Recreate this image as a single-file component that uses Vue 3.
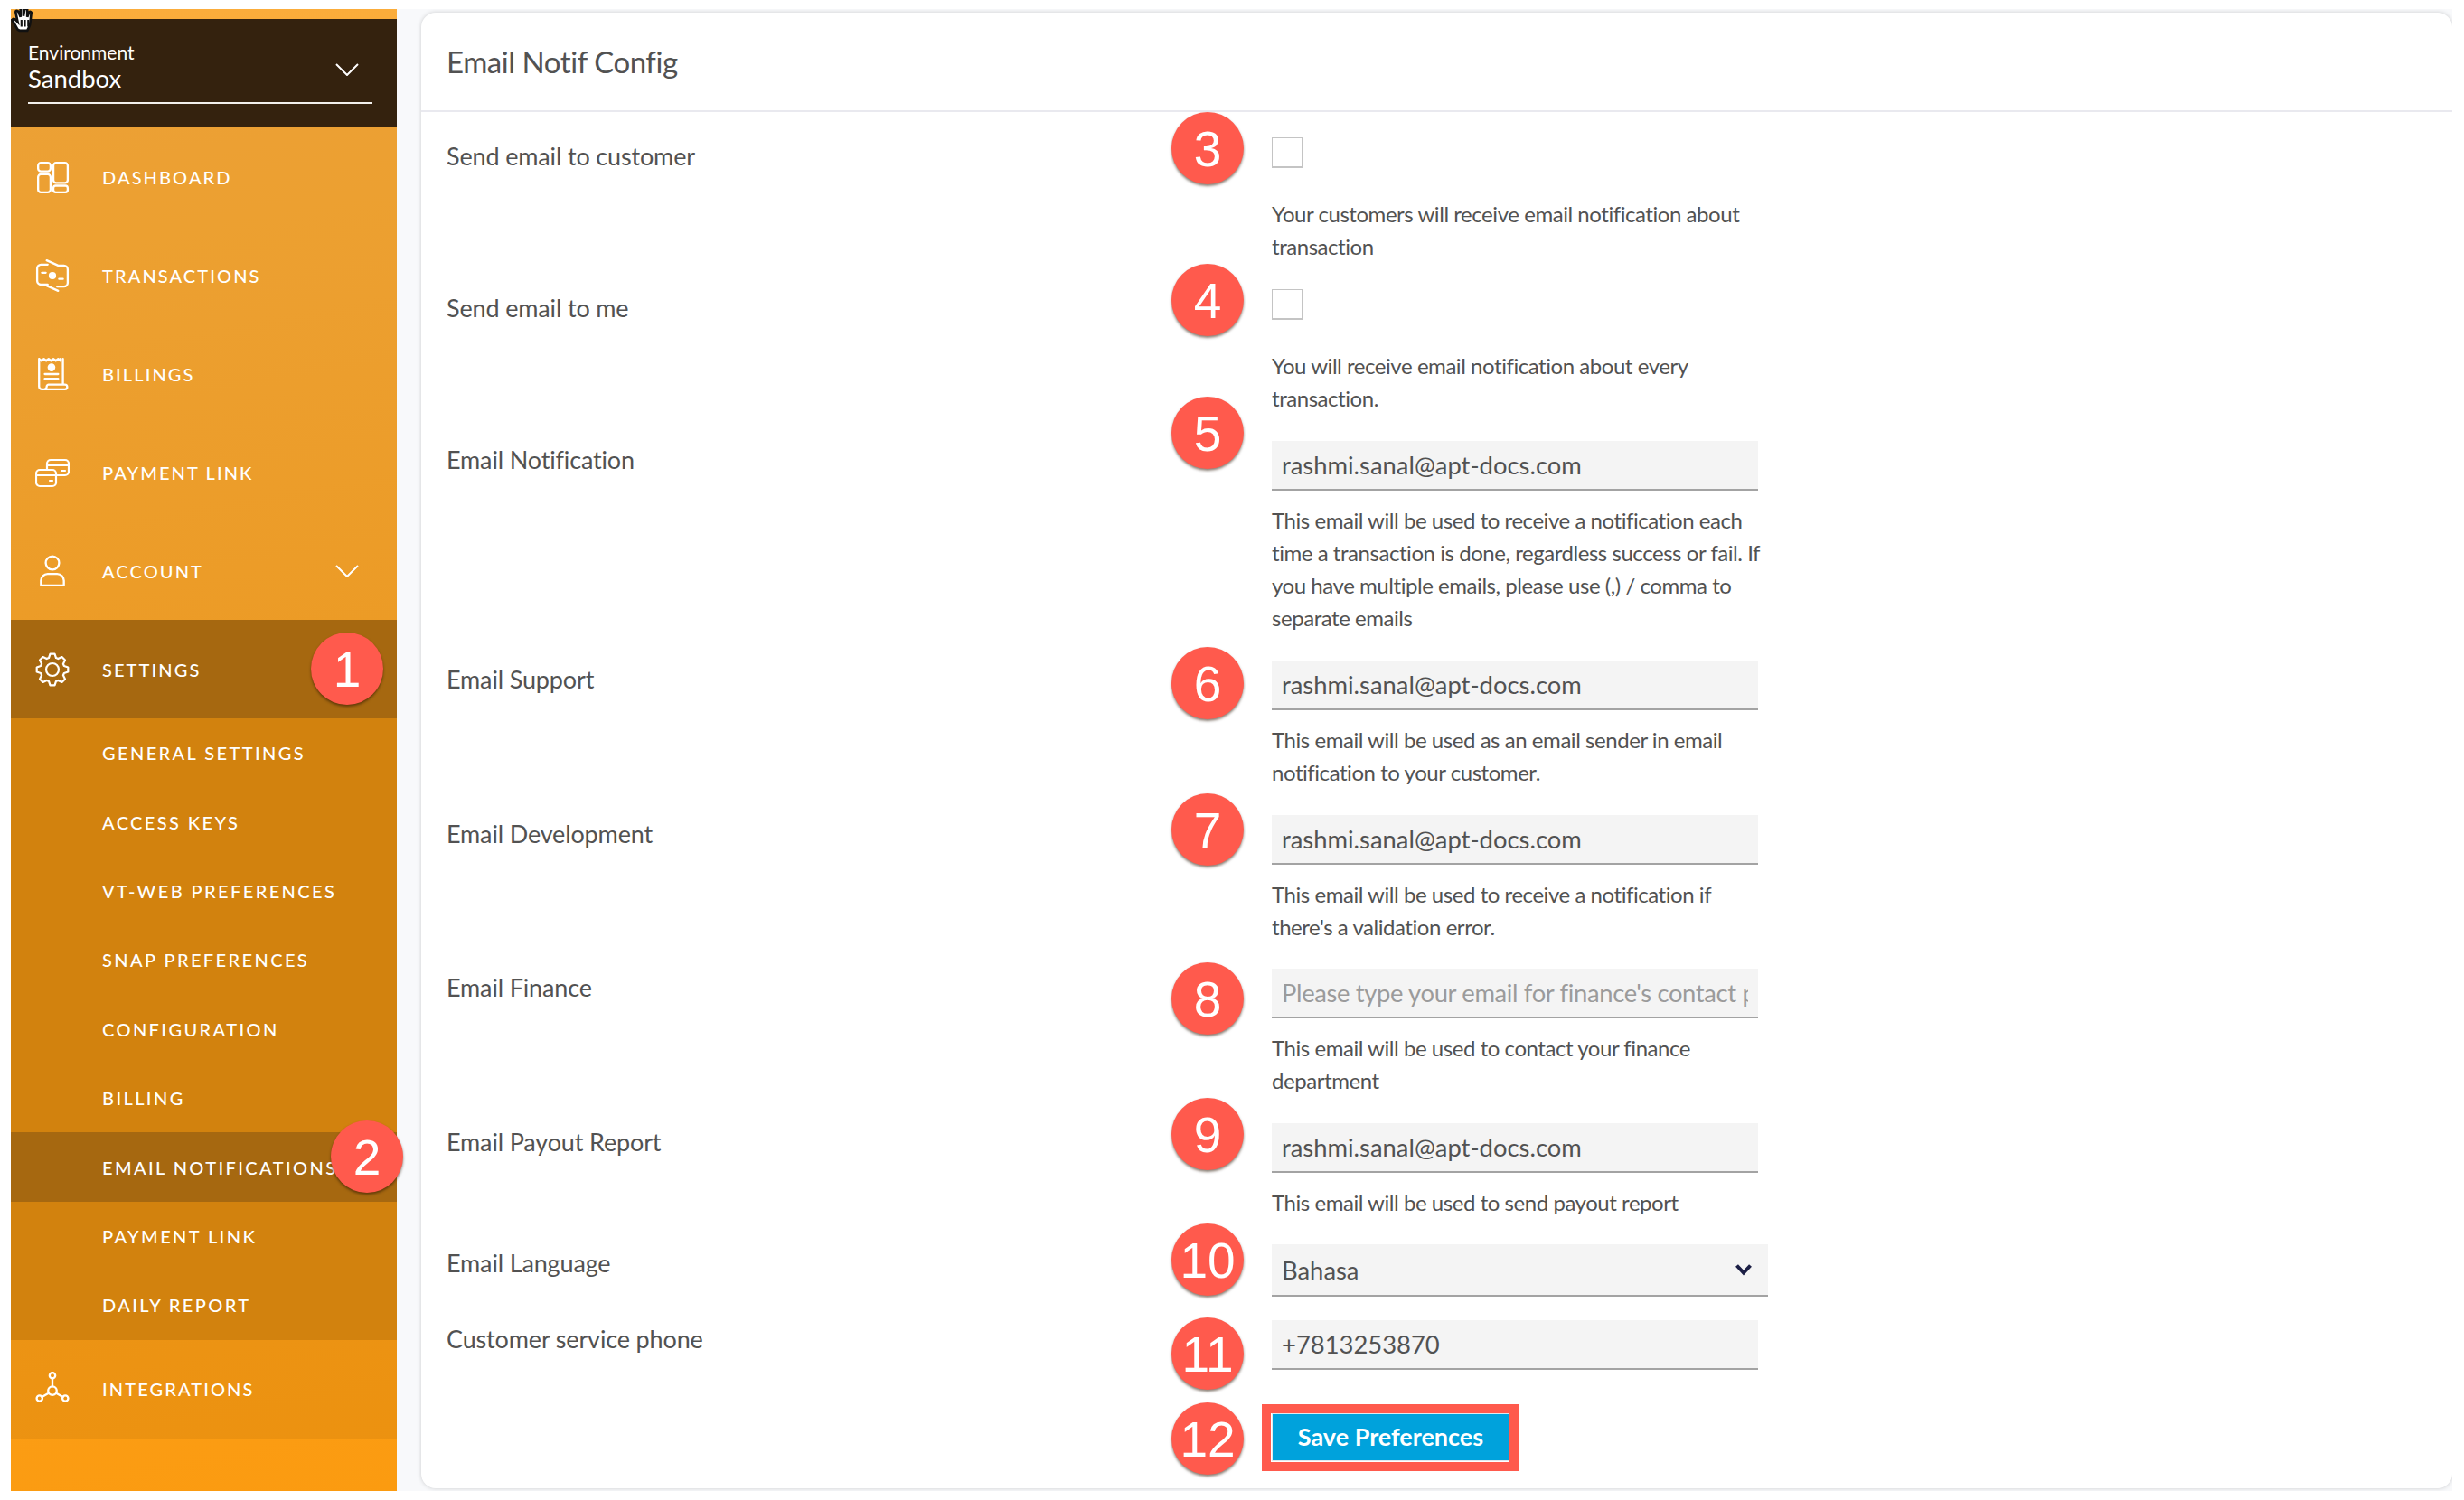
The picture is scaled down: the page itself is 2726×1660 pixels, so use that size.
<template>
  <div class="page">
    <aside class="sidebar">
      <div class="env">
        <div class="env-select">
          <div>
            <div class="env-label">Environment</div>
            <div class="env-value">Sandbox</div>
          </div>
          <svg class="chevron" viewBox="0 0 26 14"><path d="M1 1l12 12L25 1" /></svg>
        </div>
      </div>

      <nav class="nav">
        <a class="nav-item">
          <svg class="nav-icon" viewBox="0 0 36 36"><rect x="3" y="3" width="13" height="9" rx="3" /><rect x="3" y="15" width="13" height="19" rx="3" /><rect x="19" y="3" width="15" height="21" rx="3" /><rect x="19" y="27" width="15" height="7" rx="2.5" /></svg>
          <span>DASHBOARD</span>
        </a>
        <a class="nav-item">
          <svg class="nav-icon" viewBox="0 0 36 36"><path d="M13 6.5H6a4 4 0 0 0-4 4v13a4 4 0 0 0 4 4h7M23 29.500h7a4 4 0 0 0 4-4v-14a4 4 0 0 0-4-4h-5" /><path d="M12 2l12 5.500M12 28.500l12 5.500M7 15h4M25 21.500h4" /><circle cx="18" cy="18" r="2.800" class="solid" /></svg>
          <span>TRANSACTIONS</span>
        </a>
        <a class="nav-item">
          <svg class="nav-icon" viewBox="0 0 36 36"><path d="M4 2v29a3 3 0 0 0 3 3h24a2.500 2.500 0 0 0 0-5H14c-1 0-2 1-2 2s-1 3-4 3M4 2l2.500 2L9 2l2.500 2L14 2l2.500 2L19 2l2.500 2L24 2l2.500 2V2M29 2v27" /><circle cx="17" cy="11" r="3" class="solid" /><path d="M10 18h14M10 23h14" /></svg>
          <span>BILLINGS</span>
        </a>
        <a class="nav-item">
          <svg class="nav-icon" viewBox="0 0 38 36"><path d="M13 15v-7a4 4 0 0 1 4-4h16a4 4 0 0 1 4 4v9a4 4 0 0 1-4 4h-9M13 10h24" /><path d="M5 15h14a4 4 0 0 1 4 4v10a4 4 0 0 1-4 4H5a4 4 0 0 1-4-4V19a4 4 0 0 1 4-4zM1 21h22M16 27h3M29 16h4" /></svg>
          <span>PAYMENT LINK</span>
        </a>
        <a class="nav-item">
          <svg class="nav-icon" viewBox="0 0 36 36"><circle cx="18" cy="9.500" r="7" /><path d="M6 33v-5a7 7 0 0 1 7-7h10a7 7 0 0 1 7 7v5z" /></svg>
          <span>ACCOUNT</span>
          <svg class="chevron" viewBox="0 0 26 14"><path d="M1 1l12 12L25 1" /></svg>
        </a>
        <a class="nav-item active">
          <svg class="nav-icon" viewBox="0 0 38 38"><path :d="gearPath" /><circle cx="19" cy="19" r="7" /></svg>
          <span>SETTINGS</span>
          <div class="badge badge-settings">1</div>
        </a>
        <div class="sub-nav">
          <a v-for="item in subItems" :key="item" class="sub-item" :class="{ active: item === 'EMAIL NOTIFICATIONS' }">{{ item }}</a>
          <div class="badge badge-email">2</div>
        </div>
        <a class="nav-item">
          <svg class="nav-icon" viewBox="0 0 36 36"><circle cx="18" cy="4" r="3" /><circle cx="18" cy="20" r="4.500" /><circle cx="4.500" cy="28" r="3" /><circle cx="31.500" cy="28" r="3" /><path d="M18 7v8.500M14 22.500l-7 4M22 22.500l7 4" /></svg>
          <span>INTEGRATIONS</span>
        </a>
      </nav>
    </aside>

    <main class="main">
      <section class="card">
        <header class="card-header">Email Notif Config</header>
        <form class="form" @submit.prevent>
          <div v-for="row in rows" :key="row.label" class="row" :class="{ 'row-tight': row.tight }">
            <label class="row-label">{{ row.label }}</label>
            <div class="row-body">
              <div class="badge" :style="{ top: row.badgeTop + 'px' }">{{ row.badge }}</div>
              <input v-if="row.type === 'check'" type="checkbox" class="check" />
              <input v-else-if="row.type === 'text'" class="field" type="text" :value="row.value" :placeholder="row.placeholder" />
              <div v-else class="select-wrap">
                <select class="field select"><option>{{ row.value }}</option></select>
                <svg class="select-arrow" viewBox="0 0 20 14"><path d="M2.500 2.500l7.500 8 7.500-8" /></svg>
              </div>
              <p v-if="row.help" class="help" :class="{ 'help-check': row.type === 'check' }">
                <span v-for="line in row.help" :key="line">{{ line }}</span>
              </p>
            </div>
          </div>

          <div class="actions">
            <div class="badge badge-save">12</div>
            <button class="save" type="submit">Save Preferences</button>
            <div class="highlight"></div>
          </div>
        </form>
      </section>
    </main>

    <svg class="cursor" viewBox="0 0 28 26"><path d="M7 23L2 14c-1-2 1-3 3-1l2 2-2-10c0-2 2-2 3 0l2 5V2c0-2 3-2 3 0v7l1-6c0-2 3-2 3 0v7l2-5c1-1 3 0 2 2l-1 9c0 3-1 4-2 6l-1 2H9z" /><path class="cursor-lines" d="M11 13v7M14.500 13v7M18 13v7" /></svg>
  </div>
</template>

<script setup>
const subItems = [
  'GENERAL SETTINGS',
  'ACCESS KEYS',
  'VT-WEB PREFERENCES',
  'SNAP PREFERENCES',
  'CONFIGURATION',
  'BILLING',
  'EMAIL NOTIFICATIONS',
  'PAYMENT LINK',
  'DAILY REPORT',
]

const email = 'rashmi.sanal@apt-docs.com'

const rows = [
  { label: 'Send email to customer', badge: 3, badgeTop: -28, type: 'check', help: ['Your customers will receive email notification about', 'transaction'] },
  { label: 'Send email to me', badge: 4, badgeTop: -28, type: 'check', help: ['You will receive email notification about every', 'transaction.'] },
  {
    label: 'Email Notification', badge: 5, badgeTop: -49, type: 'text', value: email,
    help: ['This email will be used to receive a notification each', 'time a transaction is done, regardless success or fail. If', 'you have multiple emails, please use (,) / comma to', 'separate emails'],
  },
  { label: 'Email Support', badge: 6, badgeTop: -15, type: 'text', value: email, help: ['This email will be used as an email sender in email', 'notification to your customer.'] },
  { label: 'Email Development', badge: 7, badgeTop: -24, tight: true, type: 'text', value: email, help: ['This email will be used to receive a notification if', "there's a validation error."] },
  {
    label: 'Email Finance', badge: 8, badgeTop: -7, type: 'text', value: '',
    placeholder: "Please type your email for finance's contact person", help: ['This email will be used to contact your finance', 'department'],
  },
  { label: 'Email Payout Report', badge: 9, badgeTop: -28, tight: true, type: 'text', value: email, help: ['This email will be used to send payout report'] },
  { label: 'Email Language', badge: 10, badgeTop: -23, type: 'select', value: 'Bahasa' },
  { label: 'Customer service phone', badge: 11, badgeTop: -3, type: 'text', value: '+7813253870' },
]

// 8 tooth cog outline for the settings icon
const gearPath = (() => {
  const pts = []
  for (let i = 0; i < 8; i++) {
    const a = (i * Math.PI) / 4 - Math.PI / 8
    const step = Math.PI / 4
    const at = (r, t) => `${(19 + r * Math.cos(t)).toFixed(1)} ${(19 + r * Math.sin(t)).toFixed(1)}`
    pts.push(at(13.5, a + step * 0.12), at(17.5, a + step * 0.32), at(17.5, a + step * 0.68), at(13.5, a + step * 0.88))
  }
  return 'M' + pts.join('L') + 'Z'
})()
</script>

<style>
html,
body {
  margin: 0;
  background: #fff;
}
</style>

<style scoped>
.page {
  position: relative;
  display: flex;
  height: 1640px;
  margin: 10px 13px 10px 12px;
  background: #f8f9fb;
  font-family: Lato, "Noto Sans", sans-serif;
  color: #525252;
  overflow: hidden;
}

.sidebar {
  flex: 0 0 427px;
  padding-top: 11px;
  box-sizing: border-box;
  background: linear-gradient(170deg, #fbad3c, #fb9b10);
  color: #fff;
}

.env {
  height: 120px;
  box-sizing: border-box;
  padding: 20px 27px 0 19px;
  background: #34220e;
}

.env-select {
  display: flex;
  align-items: center;
  justify-content: space-between;
  height: 72px;
  padding-right: 15px;
  border-bottom: 2px solid #f2f0ec;
}

.env-select > div {
  margin-top: -7px;
}

.env-label {
  font-size: 21px;
  line-height: 26px;
}

.env-value {
  font-size: 27.500px;
  line-height: 32px;
}

.chevron {
  width: 26px;
  height: 14px;
  flex: none;
  fill: none;
  stroke: #fff;
  stroke-width: 2;
}

.nav-item {
  position: relative;
  display: flex;
  align-items: center;
  height: 109px;
  box-sizing: border-box;
  padding-left: 27px;
  background: rgba(0, 0, 0, 0.06);
  font-size: 20px;
  font-weight: 500;
  letter-spacing: 2.100px;
}

.nav-item .chevron {
  margin-left: auto;
  margin-right: 42px;
}

.nav-item.active,
.sub-item.active {
  background: #a66810;
}

.nav-icon {
  width: 38px;
  height: 38px;
  margin-right: 36px;
  flex: none;
  fill: none;
  stroke: #fff;
  stroke-width: 2.2;
  stroke-linecap: round;
  stroke-linejoin: round;
}

.nav-icon .solid {
  fill: #fff;
}

.sub-nav {
  position: relative;
  background: #d2820e;
}

.sub-item {
  display: flex;
  align-items: center;
  height: 76.4px;
  padding-left: 101px;
  font-size: 20px;
  font-weight: 500;
  letter-spacing: 2.400px;
}

.main {
  flex: 1;
  min-width: 0;
  padding: 4px 0 3px 27px;
}

.card {
  height: 100%;
  box-sizing: border-box;
  background: #fff;
  border-radius: 16px;
  box-shadow: 0 0 5px rgba(0, 0, 0, 0.18);
}

.card-header {
  height: 110px;
  box-sizing: border-box;
  padding-left: 28px;
  border-bottom: 2px solid #e9e9ef;
  font-size: 33px;
  letter-spacing: -0.45px;
  line-height: 108px;
}

.form {
  padding: 28px 0 0 28px;
}

.row {
  display: grid;
  grid-template-columns: 913px 1fr;
  margin-bottom: 29px;
}

.row-tight {
  margin-bottom: 28px;
}

.row-label {
  font-size: 27px;
  letter-spacing: -0.15px;
  line-height: 42px;
}

.row-body {
  position: relative;
  width: 560px;
}

.badge {
  position: absolute;
  left: -111px;
  width: 80px;
  height: 80px;
  border-radius: 50%;
  background: #ff5a4d;
  box-shadow: 0 2px 3px rgba(40, 20, 0, 0.55);
  color: #fff;
  font-family: "Liberation Sans", Arial, sans-serif;
  font-size: 55px;
  font-weight: 400;
  letter-spacing: 0;
  line-height: 82px;
  text-align: center;
}

.badge-settings {
  left: 332px;
  top: 14px;
}

.badge-email {
  left: 354px;
  top: 445px;
}

.check {
  display: block;
  width: 34px;
  height: 34px;
  margin: 0;
  box-sizing: border-box;
  appearance: none;
  background: #fff;
  border: 1px solid #c4c4c4;
  border-bottom-width: 2px;
}

.field {
  display: block;
  width: 538px;
  height: 55px;
  box-sizing: border-box;
  padding: 0 11px;
  border: 0;
  border-bottom: 2px solid #a3a3a3;
  border-radius: 0;
  background: #f4f4f4;
  color: #525252;
  font-family: inherit;
  font-size: 27.400px;
  outline: none;
}

.field::placeholder {
  color: #9b9b9b;
  opacity: 1;
  letter-spacing: -0.35px;
}

.select-wrap {
  position: relative;
  margin-bottom: -3px;
}

.select {
  width: 549px;
  height: 58px;
  appearance: none;
}

.select-arrow {
  position: absolute;
  left: 512px;
  top: 21px;
  width: 20px;
  height: 14px;
  fill: none;
  stroke: #1c1f45;
  stroke-width: 4;
}

.help {
  margin: 15px 0 0;
  font-size: 24px;
  letter-spacing: -0.45px;
  line-height: 36px;
}

.help-check {
  margin-top: 33px;
}

.help span {
  display: block;
  white-space: nowrap;
}

.actions {
  position: relative;
  margin-left: 913px;
  padding-top: 19px;
}

.save {
  display: block;
  width: 263px;
  height: 53px;
  padding: 0 0 3px;
  border: 1px solid #dfe8ee;
  background: #00a2dc;
  color: #fff;
  font-family: inherit;
  font-size: 27px;
  font-weight: 700;
}

.actions .badge {
  top: 7px;
}

.highlight {
  position: absolute;
  left: -11px;
  top: 9px;
  width: 284px;
  height: 74px;
  box-sizing: border-box;
  border: 10px solid #ff5a4d;
  pointer-events: none;
}

.cursor {
  position: absolute;
  left: 0;
  top: -2px;
  width: 30px;
  height: 28px;
  fill: #fff;
  stroke: #111;
  stroke-width: 2.500;
}

.cursor-lines {
  fill: none;
  stroke-width: 2;
}
</style>
